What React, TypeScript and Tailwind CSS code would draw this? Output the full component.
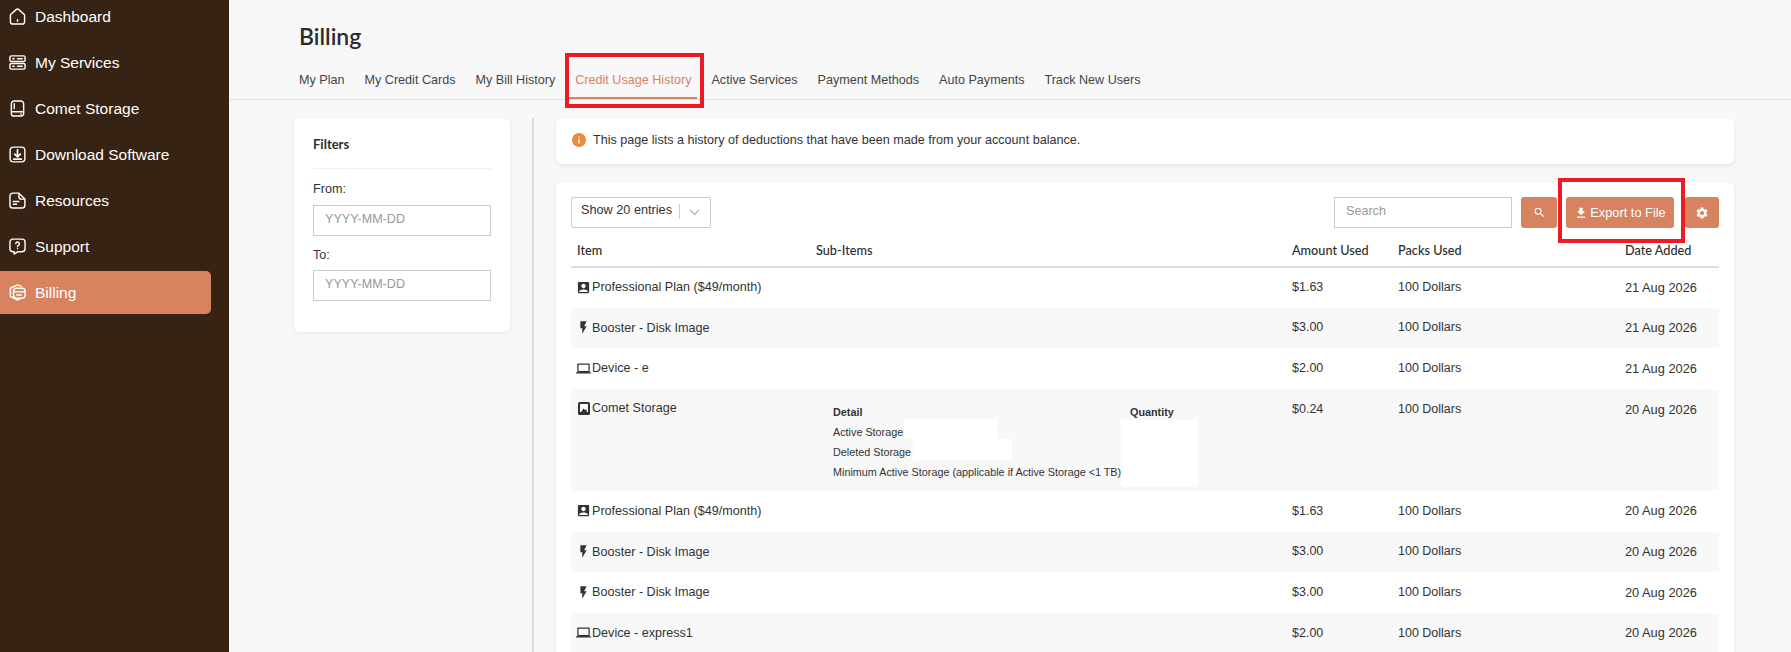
import React from "react";
import { MdAccountBox, MdFlashOn, MdLaptop, MdSearch, MdFileDownload, MdSettings } from "react-icons/md";

const S = { fill: "none", stroke: "currentColor", strokeWidth: 1.5, strokeLinecap: "round" as const, strokeLinejoin: "round" as const };

const HomeIcon = () => (
  <svg width="17" height="17" viewBox="0 0 18 18" {...S}>
    <path d="M1.5 7.2 7.600 1.700a2 2 0 0 1 2.800 0L16.500 7.200v7.300a2.500 2.500 0 0 1-2.500 2.500H4a2.500 2.500 0 0 1-2.500-2.500z" />
    <path d="M9 12.500v1.600" />
  </svg>
);
const ServicesIcon = () => (
  <svg width="17" height="17" viewBox="0 0 18 18" {...S}>
    <rect x="1" y="2" width="16" height="6" rx="1.500" />
    <rect x="1" y="10" width="16" height="6" rx="1.500" />
    <path d="M4 5h1.500M4 13h1.500M9 5h5M9 13h5" />
  </svg>
);
const StorageIcon = () => (
  <svg width="17" height="17" viewBox="0 0 18 18" {...S}>
    <path d="M2.500 4a3 3 0 0 1 3-3h7a3 3 0 0 1 3 3v10.500a2.500 2.500 0 0 1-2.500 2.500H5a2.500 2.500 0 0 1-2.500-2.500z" />
    <path d="M2.500 12.500h13M5.500 4v5M12.500 14.800h.5" />
  </svg>
);
const DownloadIcon = () => (
  <svg width="17" height="17" viewBox="0 0 18 18" {...S}>
    <rect x="1.200" y="1.200" width="15.600" height="15.600" rx="3.500" />
    <path d="M9 4v7M6 8.500 9 11.500l3-3M5 14h8" strokeWidth="1.800" />
  </svg>
);
const ResourcesIcon = () => (
  <svg width="17" height="17" viewBox="0 0 18 18" {...S}>
    <path d="M4 1.200h6.500l6.300 6.300V14a3 3 0 0 1-3 3H4a3 3 0 0 1-3-3V4.200a3 3 0 0 1 3-3z" />
    <path d="M10.500 1.500v3.500a2.500 2.500 0 0 0 2.500 2.500h3.500M4.500 10h6M4.500 13h3.500" />
  </svg>
);
const SupportIcon = () => (
  <svg width="17" height="17" viewBox="0 0 18 18" {...S}>
    <path d="M4 1.200h10a3 3 0 0 1 3 3v7.300a3 3 0 0 1-3 3H9.500L5.500 17v-2.500H4a3 3 0 0 1-3-3V4.200a3 3 0 0 1 3-3z" />
    <path d="M7.200 6a1.900 1.900 0 1 1 2.700 1.900c-.6.3-.9.700-.9 1.300M9 11.300v.2" />
  </svg>
);
const BillingIcon = () => (
  <svg width="17" height="17" viewBox="0 0 18 18" {...S}>
    <path d="M13 2.200 9 1 1.500 4.500v8.500L9 17l2-1" />
    <rect x="4.800" y="4.500" width="12.200" height="10.500" rx="3" />
    <path d="M5 8.300h12M8 11.700h5" />
  </svg>
);

const NAV: [string, React.ReactNode][] = [
  ["Dashboard", <HomeIcon />],
  ["My Services", <ServicesIcon />],
  ["Comet Storage", <StorageIcon />],
  ["Download Software", <DownloadIcon />],
  ["Resources", <ResourcesIcon />],
  ["Support", <SupportIcon />],
  ["Billing", <BillingIcon />],
];

const TABS = ["My Plan", "My Credit Cards", "My Bill History", "Credit Usage History", "Active Services", "Payment Methods", "Auto Payments", "Track New Users"];

const SdIcon = () => (
  <svg width="12" height="13" viewBox="0 0 12 13">
    <rect x="0" y="0" width="12" height="13" rx="1.500" fill="#333" />
    <rect x="2" y="2" width="8" height="8" fill="#fff" />
    <path d="M3 10l2.500-3.500L7 8l1-1 1 3z" fill="#333" />
  </svg>
);

const Plan = () => <MdAccountBox className="text-[15px] text-[#333]" />;
const Bolt = () => <MdFlashOn className="text-[15px] text-[#333]" />;
const Laptop = () => <MdLaptop className="text-[17px] text-[#333]" />;

type Row = { icon: React.ReactNode; item: string; amount: string; date: string; detail?: boolean };
const ROWS: Row[] = [
  { icon: <Plan />, item: "Professional Plan ($49/month)", amount: "$1.63", date: "21 Aug 2026" },
  { icon: <Bolt />, item: "Booster - Disk Image", amount: "$3.00", date: "21 Aug 2026" },
  { icon: <Laptop />, item: "Device - e", amount: "$2.00", date: "21 Aug 2026" },
  { icon: <SdIcon />, item: "Comet Storage", amount: "$0.24", date: "20 Aug 2026", detail: true },
  { icon: <Plan />, item: "Professional Plan ($49/month)", amount: "$1.63", date: "20 Aug 2026" },
  { icon: <Bolt />, item: "Booster - Disk Image", amount: "$3.00", date: "20 Aug 2026" },
  { icon: <Bolt />, item: "Booster - Disk Image", amount: "$3.00", date: "20 Aug 2026" },
  { icon: <Laptop />, item: "Device - express1", amount: "$2.00", date: "20 Aug 2026" },
];

const SubItems = () => (
  <div className="mt-[14px] ml-[23px] w-[400px] text-[10.800px] leading-[20px] text-[#333]">
    <div className="flex h-[19px] leading-[19px]">
      <div className="w-[297px] font-bold">Detail</div>
      <div className="font-bold">Quantity</div>
    </div>
    <div className="flex">
      <div className="w-[288px]">
        <div className="flex h-[20px]"><span className="w-[71px]">Active Storage</span><span className="-mt-[3px] h-[20px] w-[93px] bg-white" /></div>
        <div className="flex h-[20px]"><span className="w-[80px]">Deleted Storage</span><span className="-mt-[3px] h-[21px] w-[99px] bg-white" /></div>
        <div className="h-[20px] whitespace-nowrap">Minimum Active Storage (applicable if Active Storage &lt;1 TB)</div>
      </div>
      <div className="-mt-[2px] h-[67px] w-[77px] bg-white" />
    </div>
  </div>
);

const btn = "flex h-[31px] items-center justify-center rounded-[3px] bg-[#d88360] text-white";

export default function App() {
  return (
    <div className="relative flex h-[652px] w-[1791px] overflow-hidden bg-[#f8f8f8] font-['Liberation_Sans',Arial,sans-serif] text-[#333]">
      <aside className="h-full w-[229px] shrink-0 bg-[#362314] pr-[18px]">
        <nav className="-mt-[5px] flex flex-col gap-[3px]">
          {NAV.map(([label, icon]) => (
            <div
              key={label}
              className={`flex h-[43px] items-center gap-[9px] rounded-r-[5px] pl-[9px] text-[15.500px] text-white ${label === "Billing" ? "bg-[#d88360]" : ""}`}
            >
              {icon}
              <span>{label}</span>
            </div>
          ))}
        </nav>
      </aside>

      <main className="min-w-0 flex-1">
        <header className="h-[100px] border-b border-[#e0e0e0] pl-[64px]">
          <h1 className="pl-[6px] pt-[21px] font-['Lato',sans-serif] text-[23px] leading-[30px] font-semibold text-[#2c2c2c]">Billing</h1>
          <div className="mt-[18px] flex h-[30px] gap-[8px] text-[12.600px]">
            {TABS.map((t) => (
              <div
                key={t}
                className={`h-[30px] px-[6px] leading-[22px] whitespace-nowrap ${t === "Credit Usage History" ? "border-b-2 border-[#d88360] text-[#d88360]" : "text-[#444]"}`}
              >
                {t}
              </div>
            ))}
          </div>
        </header>

        <div className="flex pt-[18px] pl-[65px]">
          <section className="h-[214px] w-[216px] shrink-0 rounded-[6px] bg-white px-[19px] shadow-[0_1px_4px_rgba(0,0,0,0.08)]">
            <div className="h-[51px] border-b border-[#eee] pt-[17px] font-['Lato',sans-serif] text-[13px] leading-[18px] font-bold text-[#2c2c2c]">Filters</div>
            <div className="mt-[11px] text-[12.600px] leading-[18px]">From:</div>
            <div className="mt-[7px] h-[31px] border border-[#ccc] bg-white pl-[11px] text-[12.600px] leading-[27px] text-[#999]">YYYY-MM-DD</div>
            <div className="mt-[10px] text-[12.600px] leading-[18px]">To:</div>
            <div className="mt-[6px] h-[31px] border border-[#ccc] bg-white pl-[11px] text-[12.600px] leading-[27px] text-[#999]">YYYY-MM-DD</div>
          </section>

          <div className="mx-[22px] h-[534px] w-[2px] shrink-0 bg-[#ddd]" />

          <div className="w-[1178px] shrink-0">
            <section className="flex h-[46px] items-center gap-[7px] rounded-[6px] bg-white pb-[2px] pl-[16px] text-[12.600px] shadow-[0_2px_4px_rgba(0,0,0,0.08)]">
              <svg width="14" height="14" viewBox="0 0 14 14">
                <circle cx="7" cy="7" r="7" fill="#f0883a" />
                <path d="M7 6v4.500M7 3.400v1.200" stroke="#fff" strokeWidth="1.500" />
              </svg>
              <span>This page lists a history of deductions that have been made from your account balance.</span>
            </section>

            <section className="mt-[18px] h-[500px] rounded-[6px] bg-white px-[15px] pt-[15px] shadow-[0_1px_4px_rgba(0,0,0,0.08)]">
              <div className="flex h-[31px]">
                <div className="flex h-[31px] w-[140px] items-center rounded-[2px] border border-[#ccc] pb-[3px] pl-[9px] text-[12.700px]">
                  <span>Show 20 entries</span>
                  <span className="ml-[7px] h-[15px] w-px bg-[#ccc]" />
                  <svg className="mt-[3px] ml-[9px]" width="11" height="7" viewBox="0 0 11 7" fill="none" stroke="#bbb" strokeWidth="1.500"><path d="M1 1l4.500 4.500L10 1" /></svg>
                </div>
                <div className="ml-auto h-[31px] w-[178px] border border-[#ccc] pl-[11px] text-[12.600px] leading-[27px] text-[#999]">Search</div>
                <div className={`${btn} ml-[9px] w-[36px]`}><MdSearch className="text-[13px]" /></div>
                <div className={`${btn} ml-[9px] w-[108px] gap-[2px] text-[12.800px]`}><MdFileDownload className="text-[14px]" />Export to File</div>
                <div className={`${btn} ml-[11px] w-[34px]`}><MdSettings className="text-[14px]" /></div>
              </div>

              <table className="w-[1148px] table-fixed border-collapse text-[12.500px]">
                <colgroup>
                  <col className="w-[239px]" />
                  <col className="w-[476px]" />
                  <col className="w-[106px]" />
                  <col className="w-[227px]" />
                  <col className="w-[100px]" />
                </colgroup>
                <thead>
                  <tr className="h-[39px] border-b-2 border-[#ddd] font-['Lato',sans-serif] text-[12.700px] text-[#2c2c2c]">
                    {["Item", "Sub-Items", "Amount Used", "Packs Used", "Date Added"].map((h) => (
                      <th key={h} className="px-[6px] pt-[8px] text-left font-medium">{h}</th>
                    ))}
                  </tr>
                </thead>
                <tbody>
                  {ROWS.map((r, i) => {
                    const cell = r.detail ? "pt-[11px] align-top" : "pb-[1px]";
                    return (
                      <tr key={i} className={`${i % 2 ? "bg-[#f8f8f8]" : "bg-white"} ${r.detail ? "h-[102px]" : "h-[40.700px]"}`}>
                        <td className={`px-[6px] ${cell}`}>
                          <div className="flex items-center">
                            <span className="mr-[1px] -ml-[1px] flex w-[15px] shrink-0 items-center justify-center">{r.icon}</span>
                            <span className="text-[12.600px] leading-[16px] whitespace-nowrap">{r.item}</span>
                          </div>
                        </td>
                        <td className="p-0 align-top">{r.detail ? <SubItems /> : null}</td>
                        <td className={`px-[6px] ${cell}`}>{r.amount}</td>
                        <td className={`px-[6px] ${cell}`}>100 Dollars</td>
                        <td className={`px-[6px] whitespace-nowrap ${cell} text-[12.800px]`}>{r.date}</td>
                      </tr>
                    );
                  })}
                </tbody>
              </table>
            </section>
          </div>
        </div>
      </main>

      <div className="absolute top-[53px] left-[565px] h-[55px] w-[139px] border-[4px] border-[#ed1c24]" />
      <div className="absolute top-[178px] left-[1558px] h-[65px] w-[127px] border-[4px] border-[#ed1c24]" />
    </div>
  );
}
